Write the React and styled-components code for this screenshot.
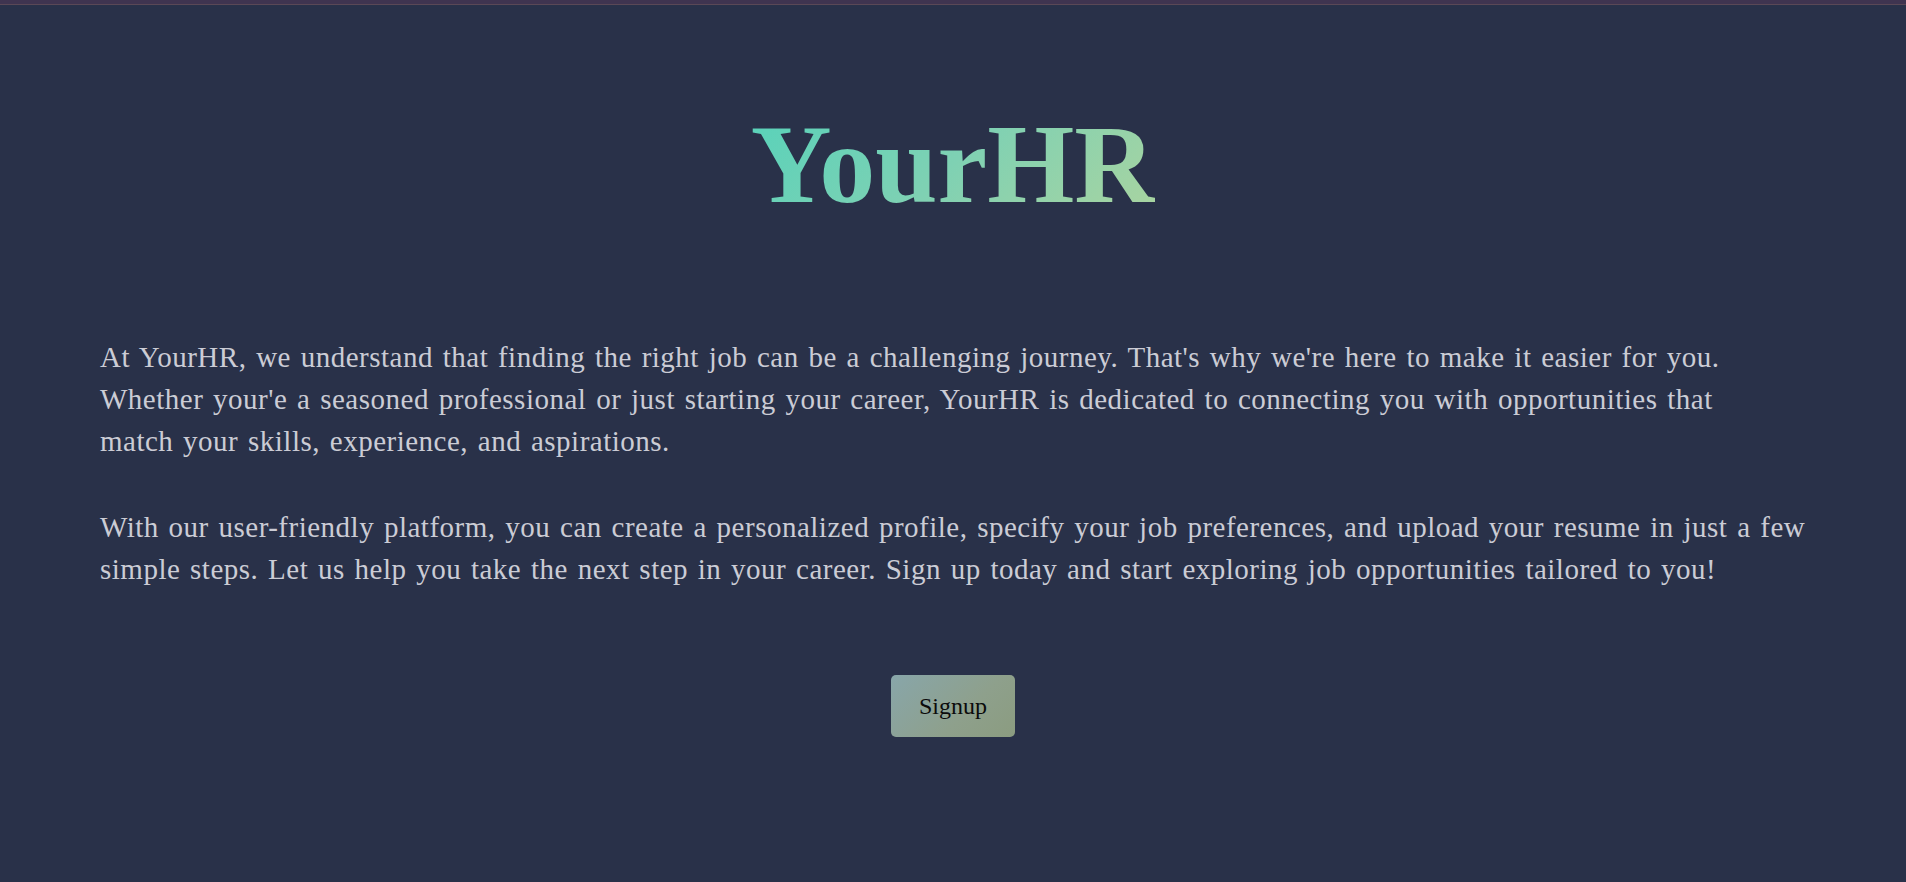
import React from "react";
import styled, { createGlobalStyle } from "styled-components";

const Global = createGlobalStyle`
  html, body { margin: 0; padding: 0; background: #293149; }
  body { font-family: "Liberation Serif", "Times New Roman", serif; }
`;

const Page = styled.div`
  min-height: 100vh;
  background: #293149;
  display: flex;
  flex-direction: column;
`;

const TopBar = styled.div`
  height: 4px;
  background: #3f3450;
  border-bottom: 1px solid #5a4856;
`;

const Main = styled.main`
  padding: 0 100px;
  display: flex;
  flex-direction: column;
`;

const Title = styled.h1`
  margin: 103px 0 0;
  align-self: center;
  font-family: "Liberation Serif", serif;
  font-weight: 700;
  font-size: 112px;
  line-height: 1;
  background: linear-gradient(135deg, #58d2ba 0%, #7fd1b3 50%, #aad4a0 100%);
  -webkit-background-clip: text;
  background-clip: text;
  color: transparent;
`;

const Text = styled.p`
  margin: ${(p) => p.$top}px 0 0;
  font-family: "Liberation Serif", serif;
  font-size: 29px;
  line-height: 42px;
  letter-spacing: 0.5px;
  word-spacing: 2px;
  white-space: nowrap;
  color: #cbccd5;
`;

const ButtonRow = styled.div`
  display: flex;
  justify-content: center;
  margin-top: 85px;
`;

const Button = styled.button`
  width: 124px;
  height: 62px;
  border: none;
  border-radius: 5px;
  background: linear-gradient(135deg, #88a6aa 0%, #8ea08c 60%, #8b9c80 100%);
  font-family: "Liberation Serif", serif;
  font-size: 24px;
  color: #0b0b0b;
  cursor: pointer;
`;

export default function App() {
  return (
    <Page>
      <Global />
      <TopBar />
      <Main>
        <Title>YourHR</Title>
        <Text $top={116}>
          At YourHR, we understand that finding the right job can be a challenging journey. That's why we're here to make it easier for you.
          <br />
          Whether your'e a seasoned professional or just starting your career, YourHR is dedicated to connecting you with opportunities that
          <br />
          match your skills, experience, and aspirations.
        </Text>
        <Text $top={44}>
          With our user-friendly platform, you can create a personalized profile, specify your job preferences, and upload your resume in just a few
          <br />
          simple steps. Let us help you take the next step in your career. Sign up today and start exploring job opportunities tailored to you!
        </Text>
        <ButtonRow>
          <Button>Signup</Button>
        </ButtonRow>
      </Main>
    </Page>
  );
}
